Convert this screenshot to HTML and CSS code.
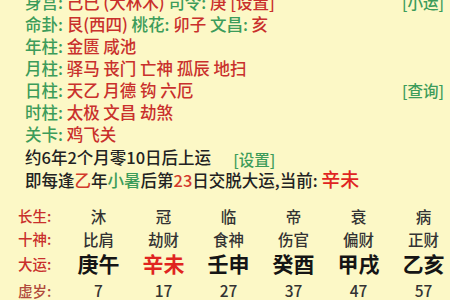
FILE: index.html
```html
<!DOCTYPE html>
<html lang="zh-CN">
<head>
<meta charset="utf-8">
<title>命盘</title>
<link rel="stylesheet" href="styles.css">
</head>
<body>
<div class="page">
  <div class="info">
    <div class="row"><span class="left"><span class="k">身宫:</span> <span class="v">己巳 (大林木)</span> <span class="k">司令:</span> <span class="v">庚</span> <span class="v">[设置]</span></span><span class="link">[小运]</span></div>
    <div class="row"><span class="left"><span class="k">命卦:</span> <span class="v">艮(西四)</span> <span class="k">桃花:</span> <span class="v">卯子</span> <span class="k">文昌:</span> <span class="v">亥</span></span></div>
    <div class="row"><span class="left"><span class="k">年柱:</span> <span class="v">金匮 咸池</span></span></div>
    <div class="row"><span class="left"><span class="k">月柱:</span> <span class="v">驿马 丧门 亡神 孤辰 地扫</span></span></div>
    <div class="row"><span class="left"><span class="k">日柱:</span> <span class="v">天乙 月德 钩 六厄</span></span><span class="link">[查询]</span></div>
    <div class="row"><span class="left"><span class="k">时柱:</span> <span class="v">太极 文昌 劫煞</span></span></div>
    <div class="row"><span class="left"><span class="k">关卡:</span> <span class="v">鸡飞关</span></span></div>
  </div>
  <div class="luck">
    <div class="line">约6年2个月零10日后上运<span class="set">[设置]</span></div>
    <div class="line">即每逢<span class="red">乙</span>年<span class="green">小暑</span>后第<span class="red">23</span>日交脱大运,当前: <span class="cur">辛未</span></div>
  </div>
  <div class="table">
    <div class="lab">长生:</div>
    <div class="cell">沐</div><div class="cell">冠</div><div class="cell">临</div><div class="cell">帝</div><div class="cell">衰</div><div class="cell">病</div>
    <div class="lab">十神:</div>
    <div class="cell">比肩</div><div class="cell">劫财</div><div class="cell">食神</div><div class="cell">伤官</div><div class="cell">偏财</div><div class="cell">正财</div>
    <div class="lab">大运:</div>
    <div class="cell big">庚午</div><div class="cell big now">辛未</div><div class="cell big">壬申</div><div class="cell big">癸酉</div><div class="cell big">甲戌</div><div class="cell big">乙亥</div>
    <div class="lab age-lab">虚岁:</div>
    <div class="cell age">7</div><div class="cell age">17</div><div class="cell age">27</div><div class="cell age">37</div><div class="cell age">47</div><div class="cell age">57</div>
  </div>
</div>
</body>
</html>
```

FILE: styles.css
```css
html, body {
  margin: 0;
  padding: 0;
  background: #fcf8c6;
  overflow: hidden;
}
body {
  width: 450px;
  height: 300px;
  font-family: "Noto Sans CJK SC", "Noto Sans", sans-serif;
  font-weight: 500;
}
.page {
  margin-top: -9px;
}
.info {
  padding-left: 25px;
  padding-right: 6px;
  font-size: 16.5px;
  line-height: 22px;
}
.row {
  display: flex;
  justify-content: space-between;
  white-space: nowrap;
}
.k { color: #3c9c5a; }
.v { color: #c9302c; }
.link {
  color: #3c9c5a;
  font-size: 15.5px;
}
.luck {
  padding-left: 25px;
  margin-top: 1px;
  font-size: 16.5px;
  line-height: 23px;
  color: #222;
  white-space: nowrap;
}
.set {
  color: #3c9c5a;
  font-size: 15.5px;
  line-height: 1;
  margin-left: 22px;
  vertical-align: -2px;
}
.red { color: #d23a2c; }
.green { color: #3c9c5a; }
.cur {
  color: #e0241f;
  font-size: 19px;
  line-height: 1;
}
.table {
  display: grid;
  grid-template-columns: 48px repeat(6, 65px);
  grid-template-rows: 23px 23px 26px 28px;
  padding-left: 18px;
  margin-top: 12px;
  align-items: center;
}
.lab {
  font-size: 14.5px;
  color: #c9302c;
}
.age-lab { color: #b04a3c; }
.cell {
  text-align: center;
  font-size: 15.5px;
  color: #333;
}
.big {
  font-size: 21px;
  font-weight: bold;
  color: #151515;
}
.big.now { color: #e0241f; }
.age { color: #333; }
```
